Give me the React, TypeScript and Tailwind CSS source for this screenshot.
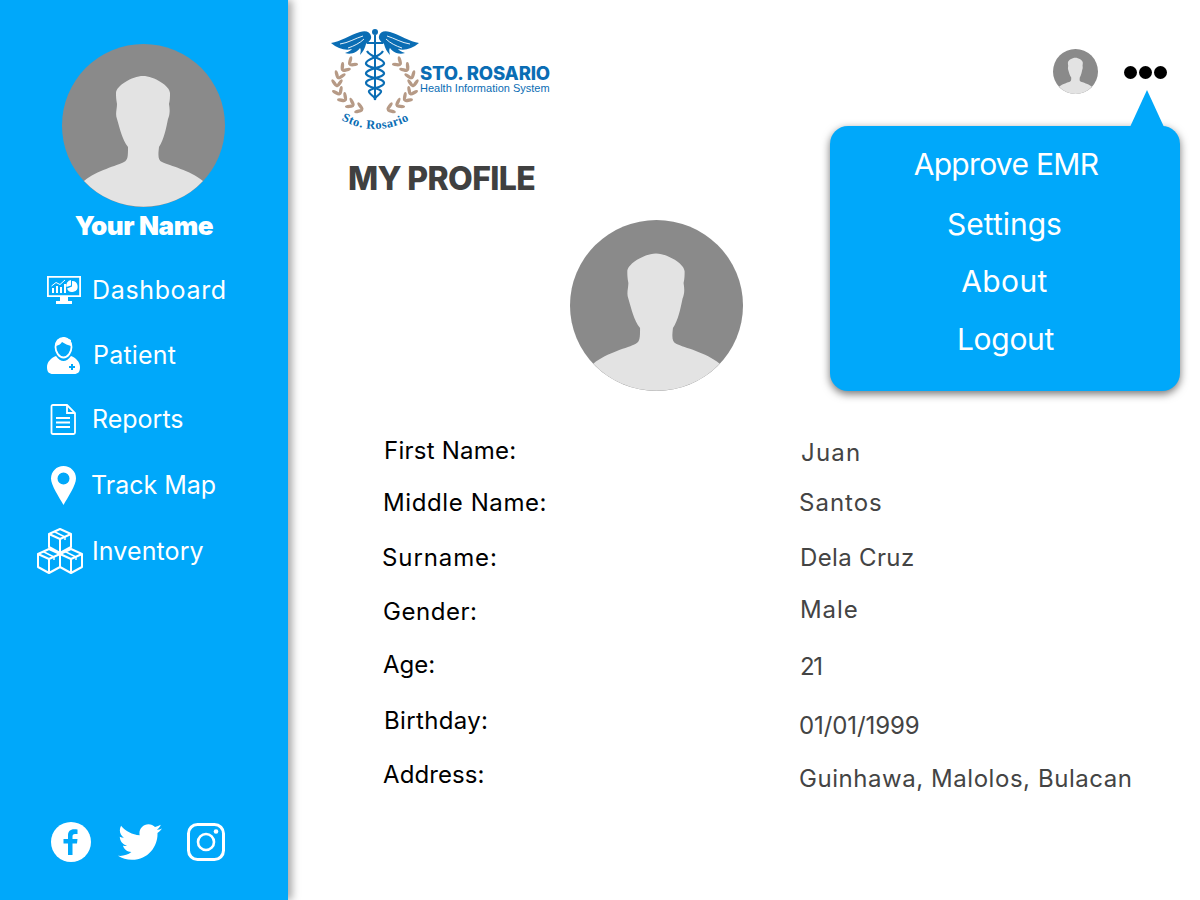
import React from "react";
import { FaTwitter } from "react-icons/fa";

const Avatar = ({ className }: { className: string }) => (
  <svg viewBox="0 0 163 163" preserveAspectRatio="none" className={className}>
    <circle cx="81.5" cy="81.5" r="81.5" fill="#8a8a8a" />
    <path
      fill="#e3e3e3"
      d="M22 137C35 126 55 122 62 118C66 116 66 112 66 103C60 95 58 85 55 75C53 70 55 65 55 60C54 55 54 52 54 49C54 42 70 32 81 32C92 32 108 42 108 49C108 52 108 56 107 60C108 66 108 70 106 75C104 85 102 95 97 103C96 112 96 116 100 118C108 122 128 126 141 137A81.5 81.5 0 0 1 22 137Z"
    />
  </svg>
);

const spine: [number, number, number][] = [
  [19, 37, -40], [12, 43, -50], [8, 51, -70], [7, 59, -90], [10, 67, -115], [16, 73, -135], [24, 78, -150], [33, 82, -160],
];

const leaf = (x: number, y: number, a: number, key: string) => {
  const r = (a * Math.PI) / 180;
  const cx = x + 4.5 * Math.cos(r);
  const cy = y + 4.5 * Math.sin(r);
  return <ellipse key={key} cx={cx} cy={cy} rx="4.6" ry="1.7" transform={`rotate(${a} ${cx} ${cy})`} />;
};

const Logo = () => (
  <svg viewBox="0 0 90 104" className="w-[90px] h-[104px] shrink-0 overflow-visible">
    <g fill="#0a6db4">
      <circle cx="45" cy="4" r="3" />
      <rect x="44" y="7" width="2" height="65" />
      <rect x="37" y="14" width="16" height="2" />
      <path d="M1 15C10 14 20 7 30 4C36 2 40 4 41 8C42 12 38 14 36 16C35 20 33 24 30 27C31 23 31 21 30 20C27 24 22 27 15 25C19 24 21 22 22 21C16 23 8 21 1 15Z" />
      <path d="M89 15C80 14 70 7 60 4C54 2 50 4 49 8C48 12 52 14 54 16C55 20 57 24 60 27C59 23 59 21 60 20C63 24 68 27 75 25C71 24 69 22 68 21C74 23 82 21 89 15Z" />
    </g>
    <g fill="none" stroke="#fff" strokeWidth="0.9">
      <path d="M10 16C18 15 26 10 33 8" />
      <path d="M18 20C24 18 30 15 34 11" />
      <path d="M80 16C72 15 64 10 57 8" />
      <path d="M72 20C66 18 60 15 56 11" />
    </g>
    <g fill="none" stroke="#0a6db4" strokeWidth="2.2">
      <path d="M37 23C41 30 53 30 54 35C55 40 37 40 36 45C35 50 54 50 54 55C54 60 38 60 39 64C40 67 46 69 45 72" />
      <path d="M53 23C49 30 37 30 36 35C35 40 53 40 54 45C55 50 36 50 36 55C36 60 52 60 51 64C50 67 44 69 45 72" />
    </g>
    <g fill="#b69a86">
      {spine.map(([x, y, a], i) => (
        <React.Fragment key={i}>
          {leaf(x, y, a - 35, `a${i}`)}
          {leaf(x, y, a + 35, `b${i}`)}
          {leaf(90 - x, y, 180 - a + 35, `c${i}`)}
          {leaf(90 - x, y, 180 - a - 35, `d${i}`)}
        </React.Fragment>
      ))}
    </g>
    <defs>
      <path id="logoArc" d="M6 89Q45 113 85 89" />
    </defs>
    <text fill="#0a6db4" fontSize="12.5" fontWeight="700" fontFamily="'Liberation Serif', serif" letterSpacing="0.5">
      <textPath href="#logoArc" startOffset="50%" textAnchor="middle">Sto. Rosario</textPath>
    </text>
  </svg>
);

const DashboardIcon = () => (
  <svg viewBox="0 0 34 28" className="w-[34px] h-[28px]">
    <path fill="#fff" d="M0 0H34V21H21V25H25V28H9V25H13V21H0ZM1.800 1.800V19.200H32.200V1.800Z" />
    <path fill="#fff" d="M5 12H7V17H5ZM9 10H11V17H9ZM13 11H15V17H13ZM17 8H19V17H17Z" />
    <path fill="none" stroke="#fff" strokeWidth="1" d="M4.500 10L9 6.500L13 8.500L18 4" />
    <path fill="#fff" d="M25 5A5.500 5.500 0 1 1 20 12.500L25 10.500Z" />
    <path fill="#fff" d="M24 4V9.500L19.500 11A5.500 5.500 0 0 1 24 4Z" />
  </svg>
);

const PatientIcon = () => (
  <svg viewBox="0 0 33 37" className="w-[33px] h-[37px]">
    <path fill="none" stroke="#fff" strokeWidth="1.800" d="M8.500 10C8.500 4 12 1 16.500 1C21 1 24.500 4 24.500 10C24.500 15 21 20.500 16.500 20.500C12 20.500 8.500 15 8.500 10Z" />
    <path fill="#fff" d="M9 9C12 8 14 7 15 5C18 7 21 8 24 9L24 3L17 0L10 3Z" />
    <path fill="#fff" d="M9 19C11 22 14 24 16.500 24C19 24 22 22 24 19C29 21 33 25 33 30C33 35 31 37 27 37H6C2 37 0 35 0 30C0 25 4 21 9 19Z" />
    <path fill="#00a8fa" d="M24 27H26V29H28V31H26V33H24V31H22V29H24Z" />
  </svg>
);

const ReportsIcon = () => (
  <svg viewBox="0 0 26 31" className="w-[26px] h-[31px]">
    <path fill="none" stroke="#fff" strokeWidth="1.800" d="M1.500 2.500Q1.500 1 3 1H17L25 9V28.500Q25 30 23.500 30H3Q1.500 30 1.500 28.500Z" />
    <path fill="none" stroke="#fff" strokeWidth="1.800" d="M17 1V9H25" />
    <path fill="#fff" d="M6 13H20V15H6ZM6 17.500H20V19.500H6ZM6 22H20V24H6Z" />
  </svg>
);

const PinIcon = () => (
  <svg viewBox="0 0 25 39" className="w-[25px] h-[39px]">
    <path fill="#fff" fillRule="evenodd" d="M12.500 0C19.500 0 25 5.500 25 12.500C25 19 17 31 12.500 39C8 31 0 19 0 12.500C0 5.500 5.500 0 12.500 0ZM12.500 6.500A6 6 0 1 0 12.500 18.500A6 6 0 1 0 12.500 6.500Z" />
  </svg>
);

const Box = ({ x, y }: { x: number; y: number }) => (
  <g transform={`translate(${x} ${y})`} fill="none" stroke="#fff" strokeWidth="2" strokeLinejoin="round">
    <path d="M11 0L22 5V18L11 24L0 18V5Z" />
    <path d="M0 5L11 10L22 5M11 10V24" />
    <path d="M5 2.500L16 8V11" strokeWidth="1.400" />
  </g>
);

const InventoryIcon = () => (
  <svg viewBox="0 0 46 46" className="w-[46px] h-[46px]">
    <Box x={12} y={1} />
    <Box x={1} y={21} />
    <Box x={23} y={21} />
  </svg>
);

const nav = [
  { label: "Dashboard", icon: <DashboardIcon />, row: "mt-[34px] h-[30px]", iconBox: "ml-[47px] w-[34px]", text: "ml-[11px] tracking-[0.65px]" },
  { label: "Patient", icon: <PatientIcon />, row: "mt-[35px] h-[30px]", iconBox: "ml-[47px] w-[33px]", text: "ml-[13px] tracking-[0.2px]" },
  { label: "Reports", icon: <ReportsIcon />, row: "mt-[34px] h-[30px]", iconBox: "ml-[50px] w-[26px]", text: "ml-[16px] tracking-[0px]" },
  { label: "Track Map", icon: <PinIcon />, row: "mt-[36px] h-[30px]", iconBox: "ml-[51px] w-[25px]", text: "ml-[15px] tracking-[0px]" },
  { label: "Inventory", icon: <InventoryIcon />, row: "mt-[36px] h-[30px]", iconBox: "ml-[37px] w-[46px] -mt-[1px]", text: "ml-[9px] tracking-[0.1px]" },
];

const labels = [
  ["First Name:", "ml-[1px] tracking-[0.25px]"],
  ["Middle Name:", "mt-[22px] tracking-[0.6px]"],
  ["Surname:", "mt-[25px] -ml-[1px] tracking-[0.9px]"],
  ["Gender:", "mt-[24px] tracking-[0.55px]"],
  ["Age:", "mt-[23px]"],
  ["Birthday:", "mt-[26px] ml-[1px] tracking-[0.35px]"],
  ["Address:", "mt-[24px] tracking-[0.1px]"],
];

const values = [
  ["Juan", "ml-[2px] tracking-[1.2px]"],
  ["Santos", "mt-[20px] tracking-[1px]"],
  ["Dela Cruz", "mt-[25px] ml-[1px] tracking-[0.35px]"],
  ["Male", "mt-[22px] ml-[1px] tracking-[0.9px]"],
  ["21", "mt-[27px] ml-[1px] tracking-[-1.5px]"],
  ["01/01/1999", "mt-[29px] tracking-[-0.1px]"],
  ["Guinhawa, Malolos, Bulacan", "mt-[23px] tracking-[0.55px]"],
];

const menu = [
  ["Approve EMR", "mt-[20px] ml-[2px] tracking-[-0.7px]"],
  ["Settings", "mt-[24px]"],
  ["About", "mt-[21px] tracking-[0.4px]"],
  ["Logout", "mt-[22px] ml-[1px] -tracking-[0.3px]"],
];

export default function App() {
  return (
    <div className="relative flex w-[1200px] h-[900px] overflow-hidden bg-white font-['Inter','Liberation_Sans',sans-serif]">
      <aside className="flex flex-col w-[288px] h-full shrink-0 bg-[#00a8fa] shadow-[4px_0_8px_rgba(0,0,0,0.35)] text-white z-10">
        <Avatar className="mt-[44px] ml-[62px] w-[163px] h-[163px] shrink-0" />
        <div className="mt-[4px] h-[30px] w-full text-center text-[26px] leading-[30px] font-black tracking-[-0.4px]">Your Name</div>
        <nav className="flex flex-col">
          {nav.map((n) => (
            <div key={n.label} className={`flex items-center ${n.row}`}>
              <div className={`flex justify-center items-center shrink-0 ${n.iconBox}`}>{n.icon}</div>
              <span className={`text-[25px] leading-[30px] ${n.text}`}>{n.label}</span>
            </div>
          ))}
        </nav>
        <div className="mt-auto mb-[36px] ml-[51px] flex items-center">
          <svg viewBox="0 0 40 40" className="w-[40px] h-[40px]">
            <circle cx="20" cy="20" r="20" fill="#fff" />
            <path fill="#00a8fa" d="M21.500 33V21.500H26L26.500 17H21.500V14.500C21.500 13 22 12 24 12H26.500V7.500C25.500 7.400 24.500 7.300 23 7.300C19.300 7.300 17 9.500 17 13.500V17H12.500V21.500H17V33Z" />
          </svg>
          <FaTwitter className="ml-[27px] w-[44px] h-[44px] text-white" />
          <svg viewBox="0 0 38 38" className="ml-[25px] w-[38px] h-[38px]">
            <rect x="1.500" y="1.500" width="35" height="35" rx="9" fill="none" stroke="#fff" strokeWidth="3" />
            <circle cx="19" cy="19" r="8" fill="none" stroke="#fff" strokeWidth="2.600" />
            <circle cx="29" cy="8.500" r="2.300" fill="#fff" />
          </svg>
        </div>
      </aside>

      <main className="flex flex-col flex-1">
        <header className="flex items-start pl-[42px] pt-[28px] h-[130px]">
          <Logo />
          <div className="mt-[35px] flex flex-col text-[#0a6db4]">
            <span className="text-[18.5px] leading-[20px] font-extrabold tracking-[-0.15px]">STO. ROSARIO</span>
            <span className="text-[11px] leading-[10px] font-['Liberation_Sans',sans-serif]">Health Information System</span>
          </div>
          <Avatar className="ml-auto mt-[21px] w-[45px] h-[45px] shrink-0" />
          <div className="flex gap-[2px] ml-[26px] mr-[33px] mt-[38px]">
            <span className="w-[13px] h-[13px] rounded-full bg-black" />
            <span className="w-[13px] h-[13px] rounded-full bg-black" />
            <span className="w-[13px] h-[13px] rounded-full bg-black" />
          </div>
        </header>
        <h1 className="mt-[29px] ml-[60px] h-[40px] text-[32px] leading-[40px] font-extrabold text-[#404040] tracking-[-0.65px]">MY PROFILE</h1>
        <Avatar className="mt-[21px] ml-[282px] w-[173px] h-[171px] shrink-0" />
        <div className="mt-[45px] ml-[95px] flex text-[24px] leading-[30px]">
          <div className="flex flex-col w-[416px] text-black">
            {labels.map(([t, c]) => (
              <span key={t} className={c}>{t}</span>
            ))}
          </div>
          <div className="flex flex-col text-[#444444] pt-[2px]">
            {values.map(([t, c]) => (
              <span key={t} className={c}>{t}</span>
            ))}
          </div>
        </div>
      </main>

      <div className="absolute left-[830px] top-[90px] w-[350px] z-20">
        <svg viewBox="0 0 34 37" className="absolute left-[300px] top-0 w-[34px] h-[37px]">
          <path d="M0 37L17 0L34 37Z" fill="#00a8fa" />
        </svg>
        <div className="mt-[36px] h-[265px] rounded-[18px] bg-[#00a8fa] shadow-[0_3px_8px_rgba(0,0,0,0.55)] flex flex-col items-center text-white text-[30px] leading-[36px]">
          {menu.map(([t, c]) => (
            <span key={t} className={`${c} -ml-[1px]`}>{t}</span>
          ))}
        </div>
      </div>
    </div>
  );
}
